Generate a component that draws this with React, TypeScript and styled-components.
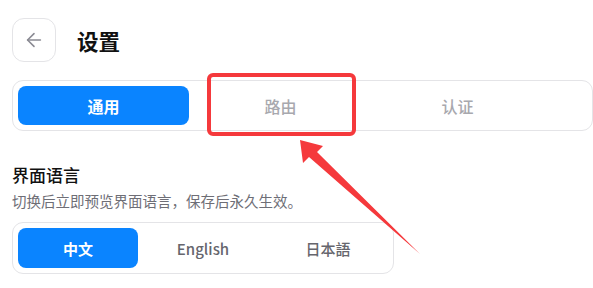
import React, { useState } from 'react';
import styled, { createGlobalStyle } from 'styled-components';
import { ArrowLeft } from 'lucide-react';

const GlobalStyle = createGlobalStyle`
  html, body {
    margin: 0;
    padding: 0;
    background: #ffffff;
    overflow: hidden;
  }
  body {
    font-family: 'Noto Sans CJK SC', 'Noto Sans', sans-serif;
    color: #1a1a1a;
  }
`;

const Page = styled.div`
  position: relative;
  width: 593px;
  height: 288px;
  padding: 18px 0 0 12px;
  box-sizing: border-box;
  overflow: hidden;
`;

const Header = styled.div`
  display: flex;
  align-items: center;
  gap: 21px;
`;

const BackButton = styled.button`
  width: 44px;
  height: 44px;
  border: 1px solid #e4e4e7;
  border-radius: 12px;
  background: #fff;
  display: flex;
  align-items: center;
  justify-content: center;
  color: #8a8a93;
  padding: 0;
  cursor: pointer;
`;

const Title = styled.h1`
  margin: 0;
  font-size: 21.5px;
  font-weight: 700;
  color: #111;
  line-height: 1;
  padding-top: 2px;
`;

const Segmented = styled.div<{ $cols: number; $col: number; $wide?: boolean }>`
  display: grid;
  grid-template-columns: repeat(${(p) => p.$cols}, ${(p) => p.$col}px);
  gap: ${(p) => (p.$wide ? 6 : 5)}px;
  padding: 5px;
  border: 1px solid #e4e4e7;
  border-radius: 11px;
  width: ${(p) => (p.$wide ? '640px' : 'auto')};
  box-sizing: border-box;
`;

const TabRow = styled.div`
  display: flex;
  margin-top: 18px;
`;

const LangRow = styled.div`
  display: flex;
  margin-top: 11px;
`;

const Seg = styled.button<{ $active?: boolean; $h: number; $size: number; $muted?: boolean }>`
  height: ${(p) => p.$h}px;
  border: none;
  border-radius: 8px;
  background: ${(p) => (p.$active ? '#0a84ff' : 'transparent')};
  color: ${(p) => (p.$active ? '#ffffff' : p.$muted ? '#a8a8ae' : '#66666d')};
  font-family: inherit;
  font-size: ${(p) => p.$size}px;
  font-weight: ${(p) => (p.$active ? 700 : 500)};
  padding: 0;
  cursor: pointer;
`;

const Section = styled.div`
  margin-top: 33px;
`;

const SectionTitle = styled.div`
  font-size: 17px;
  font-weight: 500;
  line-height: 22px;
  color: #111;
`;

const SectionDesc = styled.div`
  margin-top: 5px;
  font-size: 14.5px;
  line-height: 20px;
  color: #6e6e76;
`;

const Overlay = styled.svg`
  position: absolute;
  left: 0;
  top: 0;
  pointer-events: none;
`;

const tabs = ['通用', '路由', '认证'];
const langs = ['中文', 'English', '日本語'];

export default function App() {
  const [tab, setTab] = useState(0);
  const [lang, setLang] = useState(0);

  return (
    <>
      <GlobalStyle />
      <Page>
        <Header>
          <BackButton aria-label="返回">
            <ArrowLeft size={22} strokeWidth={1.7} />
          </BackButton>
          <Title>设置</Title>
        </Header>

        <TabRow>
          <Segmented $cols={3} $col={171} $wide>
            {tabs.map((t, i) => (
              <Seg key={t} $h={39} $size={16} $active={tab === i} $muted onClick={() => setTab(i)}>
                {t}
              </Seg>
            ))}
          </Segmented>
        </TabRow>

        <Section>
          <SectionTitle>界面语言</SectionTitle>
          <SectionDesc>切换后立即预览界面语言，保存后永久生效。</SectionDesc>
          <LangRow>
            <Segmented $cols={3} $col={120}>
              {langs.map((l, i) => (
                <Seg key={l} $h={40} $size={15} $active={lang === i} onClick={() => setLang(i)}>
                  {l}
                </Seg>
              ))}
            </Segmented>
          </LangRow>
        </Section>

        <Overlay width="593" height="288" viewBox="0 0 593 288">
          <rect x="209" y="75" width="145" height="59" rx="4" fill="none" stroke="#f5393c" strokeWidth="4" />
          <polygon
            points="300,140 323,146 317,152 420,254 309,157 303,163"
            fill="#f5393c"
          />
        </Overlay>
      </Page>
    </>
  );
}
